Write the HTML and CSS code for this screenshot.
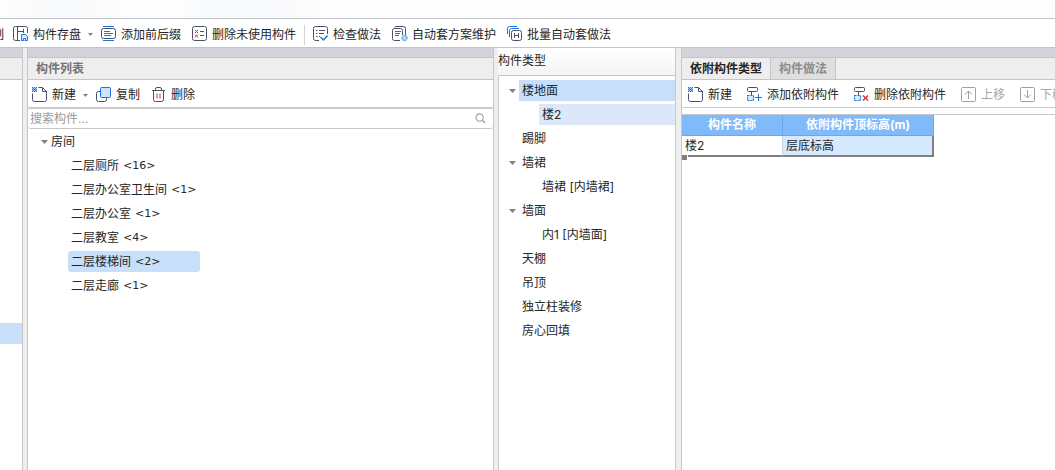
FILE: index.html
```html
<!DOCTYPE html>
<html lang="zh-CN">
<head>
<meta charset="utf-8">
<title>构件列表</title>
<link rel="stylesheet" href="styles.css">
</head>
<body>
<svg class="defs" aria-hidden="true">
  <symbol id="i-new" viewBox="0 0 15 15"><path d="M.5 6.500v6q0 2 2 2h10q2 0 2-2V4.500l-4-4H6.500M10.500 .5v4h4" fill="none" stroke="#4a5068"/><path d="M0 0h5v5H0z" fill="#a9cdf8"/><path d="M0 0h1v1H0zM2 0h1v1H2zM4 0h1v1H4zM1 1h1v1H1zM3 1h1v1H3zM0 2h1v1H0zM2 2h1v1H2zM4 2h1v1H4zM1 3h1v1H1zM3 3h1v1H3zM0 4h1v1H0zM2 4h1v1H2zM4 4h1v1H4z" fill="#1a73e0"/></symbol>
  <symbol id="i-down" viewBox="0 0 7 4"><path d="M0 0h7L3.500 4z" fill="#808080"/></symbol>
  <symbol id="i-attach" viewBox="0 0 15 15"><rect x=".5" y=".5" width="10" height="4" rx="1" fill="none" stroke="#4a5068"/><path d="M4.500 5v3" stroke="#4a5068"/><rect x="0" y="8" width="7" height="6" fill="#dcebfd"/><rect x=".5" y="8.500" width="6" height="5" fill="none" stroke="#1a73e0" stroke-width="1.200" stroke-dasharray="2 1"/></symbol>
</svg>
<div class="app">
  <div class="titlebar"></div>
  <nav class="toolbar main-toolbar" aria-label="构件工具">
    <button class="tool cut">复制</button>
    <button class="tool"><svg class="icon" viewBox="0 0 15 15"><path d="M7 14.500H2.500q-2 0-2-2v-10q0-2 2-2h10q2 0 2 2V7M4.500 1v13M4.500 5.500h6M10.500 3v4" fill="none" stroke="#4a5068"/><path d="M8.500 8.500h4l2 2v4h-6z" fill="#dcebfd" stroke="#1a73e0"/><path d="M10.500 14.500v-2h2v2" fill="#fff" stroke="#1a73e0"/></svg>构件存盘<svg class="drop"><use href="#i-down"/></svg></button>
    <button class="tool"><svg class="icon" viewBox="0 0 15 15"><path d="M2 .5h11M2 14.500h11" stroke="#1a73e0"/><rect x=".5" y="2.500" width="14" height="10" rx="2" fill="none" stroke="#4a5068"/><path d="M3 5.500h6M3 7.500h9M3 9.500h7" stroke="#1a73e0"/></svg>添加前后缀</button>
    <button class="tool"><svg class="icon" viewBox="0 0 15 15"><rect x=".5" y=".5" width="14" height="14" rx="2" fill="none" stroke="#4a5068"/><path d="M3 4l3 3M6 4L3 7M3 8.500l3 3M6 8.500l-3 3" stroke="#dd2828"/><path d="M8 5.500h4M8 9.500h4" stroke="#4a5068"/></svg>删除未使用构件</button>
    <span class="divider"></span>
    <button class="tool"><svg class="icon" viewBox="0 0 15 15"><path d="M6 14.500H2.500q-2 0-2-2v-10q0-2 2-2h10q2 0 2 2V8M3 4.500h1.500M6 4.500h6M3 7.500h1.500M6 7.500h5M3 10.500h1.500M6 10.500h1" fill="none" stroke="#4a5068"/><path d="M7.500 11l3 3 4-4.500" fill="none" stroke="#1a73e0" stroke-width="1.500"/></svg>检查做法</button>
    <button class="tool"><svg class="icon" viewBox="0 0 15 15"><path d="M2.500 1.500q.5-1 1.500-1h7.500q2 0 2 2V9" fill="none" stroke="#4a5068"/><path d="M8 14.500H2.500q-2 0-2-2v-8q0-2 2-2h6q2 0 2 2V9" fill="none" stroke="#4a5068"/><path d="M3 5.500h6M3 7.500h5M3 9.500h4" stroke="#1a73e0"/><circle cx="12.500" cy="12" r="2.500" fill="#b9d7fb" stroke="#6ba8f2" stroke-dasharray="1.500 .5" stroke-width="1.500"/></svg>自动套方案维护</button>
    <button class="tool"><svg class="icon" viewBox="0 0 15 15"><path d="M.5 8V2.500q0-2 2-2H10M2.500 11V4.500q0-2 2-2H12" fill="none" stroke="#1a73e0"/><rect x="4.500" y="4.500" width="10" height="10" rx="2" fill="#fff" stroke="#4a5068"/><path d="M7.500 7v5M11.500 7v5M7.500 9.500h4" stroke="#4a5068"/></svg>批量自动套做法</button>
  </nav>
  <main class="workspace">
    <section class="panel side"><div class="strip"></div><div class="head"></div><div class="side-row"></div></section>
    <section class="panel list">
      <div class="strip"></div>
      <h2 class="head list-title">构件列表</h2>
      <div class="toolbar">
        <button class="tool"><svg class="icon"><use href="#i-new"/></svg>新建<svg class="drop"><use href="#i-down"/></svg></button>
        <button class="tool"><svg class="icon" viewBox="0 0 15 15"><rect x=".5" y="4.500" width="10" height="10" rx="2" fill="#fff" stroke="#4a5068"/><rect x="4.500" y=".5" width="10" height="10" rx="1" fill="#cfe3fc" stroke="#1a73e0"/></svg>复制</button>
        <button class="tool"><svg class="icon" viewBox="0 0 15 15"><path d="M1 3.500h13M4.500 3V2q0-1.500 1.500-1.500h3q1.500 0 1.500 1.500v1M2.500 4v8.500q0 2 2 2h6q2 0 2-2V4" fill="none" stroke="#4a5068"/><path d="M6 6.500v5M9 6.500v5" stroke="#dd2828"/></svg>删除</button>
      </div>
      <label class="search"><input type="text" placeholder="搜索构件..." aria-label="搜索构件"><svg class="glass" viewBox="0 0 12 12"><circle cx="5" cy="5" r="4" fill="none" stroke="#a0a0a0" stroke-width="1.200"/><path d="M8 8l3 3" stroke="#a0a0a0" stroke-width="1.500"/></svg></label>
      <ul class="tree rooms">
        <li><div class="node"><svg class="caret"><use href="#i-down"/></svg>房间</div>
          <ul>
            <li class="node">二层厕所<span class="count">&lt;16&gt;</span></li>
            <li class="node">二层办公室卫生间<span class="count">&lt;1&gt;</span></li>
            <li class="node">二层办公室<span class="count">&lt;1&gt;</span></li>
            <li class="node">二层教室<span class="count">&lt;4&gt;</span></li>
            <li class="node picked">二层楼梯间<span class="count">&lt;2&gt;</span></li>
            <li class="node">二层走廊<span class="count">&lt;1&gt;</span></li>
          </ul>
        </li>
      </ul>
    </section>
    <section class="types">
      <h2 class="types-title">构件类型</h2>
      <ul class="tree kinds">
        <li><div class="node current"><svg class="caret"><use href="#i-down"/></svg>楼地面</div><ul><li class="node soft">楼2</li></ul></li>
        <li class="node">踢脚</li>
        <li><div class="node"><svg class="caret"><use href="#i-down"/></svg>墙裙</div><ul><li class="node">墙裙 [内墙裙]</li></ul></li>
        <li><div class="node"><svg class="caret"><use href="#i-down"/></svg>墙面</div><ul><li class="node">内1 [内墙面]</li></ul></li>
        <li class="node">天棚</li>
        <li class="node">吊顶</li>
        <li class="node">独立柱装修</li>
        <li class="node">房心回填</li>
      </ul>
    </section>
    <section class="panel detail">
      <div class="strip"></div>
      <div class="head tabs" role="tablist">
        <button class="tab active" role="tab" aria-selected="true">依附构件类型</button>
        <button class="tab" role="tab" aria-selected="false">构件做法</button>
      </div>
      <div class="toolbar wide">
        <button class="tool"><svg class="icon"><use href="#i-new"/></svg>新建</button>
        <button class="tool"><svg class="icon" viewBox="0 0 15 15"><use href="#i-attach" width="15" height="15"/><path d="M8 10.500h7M11.500 7v7" stroke="#1a73e0"/></svg>添加依附构件</button>
        <button class="tool"><svg class="icon" viewBox="0 0 15 15"><use href="#i-attach" width="15" height="15"/><path d="M9 8.500l5 5M14 8.500l-5 5" stroke="#dd2828" stroke-width="1.300"/></svg>删除依附构件</button>
        <button class="tool" disabled><svg class="icon" viewBox="0 0 15 15"><rect x=".5" y=".5" width="14" height="14" rx="1" fill="none" stroke="#a0a0a0"/><path d="M7.500 12V4M4 7.500L7.500 4 11 7.500" fill="none" stroke="#a0a0a0"/></svg>上移</button>
        <button class="tool" disabled><svg class="icon" viewBox="0 0 15 15"><rect x=".5" y=".5" width="14" height="14" rx="1" fill="none" stroke="#a0a0a0"/><path d="M7.500 3v8M4 7.500L7.500 11 11 7.500" fill="none" stroke="#a0a0a0"/></svg>下移</button>
      </div>
      <div class="sheet">
        <table class="grid">
          <thead><tr><th class="name">构件名称</th><th>依附构件顶标高(m)</th></tr></thead>
          <tbody><tr><td>楼2</td><td class="filled">层底标高</td></tr></tbody>
        </table>
      </div>
    </section>
  </main>
</div>
</body>
</html>
```
FILE: styles.css
```css
* { box-sizing: border-box; }
body {
  margin: 0;
  font: 12px/20px Inter, "Noto Sans CJK SC", sans-serif;
  color: #262626;
  background: #fff;
}
button, input { font: inherit; color: inherit; }
h2 { margin: 0; font-size: 12px; }
ul { list-style: none; margin: 0; padding: 0; }
.defs { display: none; }
.app { display: flex; flex-direction: column; min-height: 100vh; overflow: hidden; }
.titlebar {
  height: 19px;
  border-bottom: 1px solid #c1c4ca;
  background: linear-gradient(90deg, #fdfdfe, #f9fafb 4%, #f9fafb 8%, #fdfdfe 12%, #fdfdfe 17%, #f7f9fb 20%, #f8f9fb 25%, #fdfdfe 31%);
}

.toolbar {
  display: flex;
  align-items: center;
  gap: 11px;
  height: 28px;
  padding: 3px 0 0 4px;
  border-bottom: 1px solid #c8cace;
  white-space: nowrap;
  overflow: hidden;
}
.main-toolbar { height: 29px; padding-left: 0; border-color: #c1c4ca; }
.toolbar.wide { gap: 15px; padding-left: 6px; }
.tool {
  display: flex;
  flex: none;
  align-items: center;
  gap: 5px;
  padding: 0;
  border: 0;
  background: none;
}
.tool:disabled { color: #a6a6a6; }
.cut { margin: 0 -2px 0 -20px; }
.icon { width: 15px; height: 15px; margin-bottom: 2px; overflow: visible; }
.drop { width: 5px; height: 3px; margin: 0 -3px 0 2px; }
.divider { width: 1px; height: 20px; margin: 0 -3px; background: #d4d4d8; }

.workspace {
  flex: 1;
  display: grid;
  grid-template-columns: 23px 471fr 182px 379fr;
  background: #eee;
}
.panel { min-width: 0; background: #fff; border-left: 1px solid #c4c6ca; }
.strip { height: 10px; background: #d3d4d9; border-bottom: 1px solid #c1c6cb; }
.head { height: 22px; background: #eee; border-bottom: 1px solid #c1c6cb; }
.side { border-left: 0; border-right: 1px solid #c8c8c8; }
.side-row { height: 21px; margin-top: 243px; background: #c8dffa; }
.list { margin-left: 4px; border-right: 1px solid #c8c8c8; }
.list-title { padding-left: 8px; color: #747474; line-height: 22px; }
.search {
  display: flex;
  align-items: center;
  height: 21px;
  padding: 0 7px 0 2px;
  border: 1px solid #c8c8c8;
  border-width: 1px 0;
  border-radius: 3px;
}
.search input { flex: 1; min-width: 0; height: 18px; padding: 0; border: 0; outline: 0; background: none; }
.search input::placeholder { color: #9a9a9a; opacity: 1; }
.glass { width: 11px; height: 11px; }

.node { display: flex; align-items: center; height: 21px; margin: 1px 0 3px; padding-left: 3px; }
.caret { width: 7px; height: 4px; }
.count { margin-left: 4px; font-family: "DejaVu Sans", sans-serif; font-size: 11px; }
.rooms { padding: 1px 0 0 10px; }
.rooms .caret { margin-right: 3px; }
.rooms ul { padding-left: 30px; }
.picked { width: 132px; background: #c8dffa; border-radius: 3px; }

.types { margin-left: 4px; background: #fff; border-right: 1px solid #c8c8c8; }
.types-title {
  height: 27px;
  padding-top: 3px;
  font-weight: 400;
  background: linear-gradient(#fff, #f4f4f4);
}
.kinds {
  height: calc(100% - 27px);
  padding: 3px 0 0 20px;
  border: 1px solid #c8c8c8;
  border-width: 1px 0 0 1px;
}
.kinds .caret { flex: none; margin: 0 6px 0 -13px; }
.kinds ul { padding-left: 20px; }
.current { background: #c8dffa; }
.soft { background: #dce8fa; }

.detail { margin-left: 5px; }
.tabs { display: flex; }
.tab {
  padding: 0 8px;
  border: 0;
  border-right: 1px solid #c1c6cb;
  background: #dfdfdf;
  color: #8c8c8c;
  font-weight: 700;
  line-height: 22px;
  white-space: nowrap;
}
.tab.active { background: #eee; color: #262626; }
.sheet { margin-top: 6px; border-top: 1px solid #c8c8c8; }
.grid { position: relative; width: 252px; table-layout: fixed; border-collapse: separate; border-spacing: 0; }
.grid::after {
  content: "";
  position: absolute;
  left: 0;
  bottom: -3px;
  width: 5px;
  height: 5px;
  background: #808080;
  border-right: 1px solid #fff;
  border-top: 1px solid #fff;
}
.name { width: 101px; }
.grid th {
  height: 21px;
  padding: 0;
  color: #fff;
  line-height: 20px;
  background: #80bafa;
  border: 1px solid #68a9ee;
  border-width: 0 1px 1px 0;
}
.grid td {
  height: 21px;
  padding: 0 3px;
  line-height: 19px;
  border-bottom: 2px solid #808080;
  border-right: 1px solid #c8d8e8;
}
.grid .filled { background: #d5e9ff; border-right: 2px solid #808080; }
```
